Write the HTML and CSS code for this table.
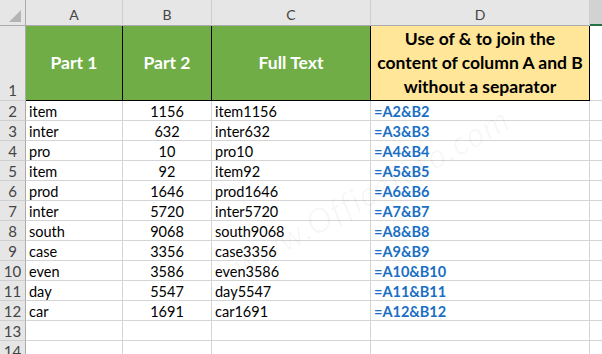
FILE: index.html
```html
<!DOCTYPE html>
<html lang="en">
<head>
<meta charset="UTF-8">
<title>Join with &amp;</title>
<link rel="stylesheet" href="styles.css">
</head>
<body>
<div class="sheet">
    <!-- column headers -->
    <div class="corner"><span class="tri"></span></div>
    <div class="colhead">A</div>
    <div class="colhead">B</div>
    <div class="colhead">C</div>
    <div class="colhead">D</div>
    <div class="colhead sel"></div>

    <!-- row 1 : titles -->
    <div class="rowhead tall">1</div>
    <div class="cell title">Part 1</div>
    <div class="cell title">Part 2</div>
    <div class="cell title">Full Text</div>
    <div class="cell note">Use of &amp; to join the<br>content of column A and B<br>without a separator</div>
    <div class="cell last"></div>

    <div class="rowhead">2</div><div class="cell">item</div><div class="cell num">1156</div><div class="cell">item1156</div><div class="cell formula">=A2&amp;B2</div><div class="cell last"></div>
    <div class="rowhead">3</div><div class="cell">inter</div><div class="cell num">632</div><div class="cell">inter632</div><div class="cell formula">=A3&amp;B3</div><div class="cell last"></div>
    <div class="rowhead">4</div><div class="cell">pro</div><div class="cell num">10</div><div class="cell">pro10</div><div class="cell formula">=A4&amp;B4</div><div class="cell last"></div>
    <div class="rowhead">5</div><div class="cell">item</div><div class="cell num">92</div><div class="cell">item92</div><div class="cell formula">=A5&amp;B5</div><div class="cell last"></div>
    <div class="rowhead">6</div><div class="cell">prod</div><div class="cell num">1646</div><div class="cell">prod1646</div><div class="cell formula">=A6&amp;B6</div><div class="cell last"></div>
    <div class="rowhead">7</div><div class="cell">inter</div><div class="cell num">5720</div><div class="cell">inter5720</div><div class="cell formula">=A7&amp;B7</div><div class="cell last"></div>
    <div class="rowhead">8</div><div class="cell">south</div><div class="cell num">9068</div><div class="cell">south9068</div><div class="cell formula">=A8&amp;B8</div><div class="cell last"></div>
    <div class="rowhead">9</div><div class="cell">case</div><div class="cell num">3356</div><div class="cell">case3356</div><div class="cell formula">=A9&amp;B9</div><div class="cell last"></div>
    <div class="rowhead">10</div><div class="cell">even</div><div class="cell num">3586</div><div class="cell">even3586</div><div class="cell formula">=A10&amp;B10</div><div class="cell last"></div>
    <div class="rowhead">11</div><div class="cell">day</div><div class="cell num">5547</div><div class="cell">day5547</div><div class="cell formula">=A11&amp;B11</div><div class="cell last"></div>
    <div class="rowhead">12</div><div class="cell">car</div><div class="cell num">1691</div><div class="cell">car1691</div><div class="cell formula">=A12&amp;B12</div><div class="cell last"></div>
    <div class="rowhead">13</div><div class="cell"></div><div class="cell"></div><div class="cell"></div><div class="cell"></div><div class="cell last"></div>
    <div class="rowhead">14</div><div class="cell"></div><div class="cell"></div><div class="cell"></div><div class="cell"></div><div class="cell last"></div>

    <div class="watermark">www.OfficeTuto.com</div>
</div>
</body>
</html>
```

FILE: styles.css
```css
body {
    margin: 0;
    padding: 0;
    background-color: #fff;
    font-family: 'Lato', 'Liberation Sans', sans-serif;
    overflow: hidden;
}

.sheet {
    position: relative;
    display: grid;
    grid-template-columns: 26px 97px 89px 159px 219px 1fr;
    grid-template-rows: 26px 75px repeat(13, 20px);
    width: 602px;
    height: 354px;
    overflow: hidden;
}

/* header strip */
.corner,
.colhead,
.rowhead {
    box-sizing: border-box;
    background-color: #e6e6e6;
    color: #444;
    font-size: 14px;
    display: flex;
    justify-content: center;
    align-items: center;
}
.corner {
    border-right: 1px solid #ababab;
    border-bottom: 1px solid #ababab;
    position: relative;
}
.tri {
    position: absolute;
    right: 4px;
    bottom: 3px;
    width: 12px;
    height: 12px;
    background-color: #b4b4b4;
    clip-path: polygon(100% 0, 100% 100%, 0 100%);
}
.colhead {
    border-right: 1px solid #cfcfcf;
    border-bottom: 1px solid #ababab;
    padding-top: 4px;
}
.colhead.sel {
    background-color: #d2d2d2;
    border-right: none;
    border-bottom: 2px solid #217346;
}
.rowhead {
    border-right: 1px solid #ababab;
    border-bottom: 1px solid #cfcfcf;
    font-size: 15px;
    padding-top: 1px;
}
.rowhead.tall {
    align-items: flex-end;
    padding-bottom: 1px;
}

/* cells */
.cell {
    box-sizing: border-box;
    border-right: 1px solid #d4d4d4;
    border-bottom: 1px solid #d4d4d4;
    font-size: 14.5px;
    line-height: 19px;
    padding: 1px 3px 0 3px;
    color: #000;
    white-space: nowrap;
}
.cell.last {border-right: none;}
.num {text-align: center;}
.formula {
    color: #1a6fc4;
    font-weight: 700;
}

.title,
.note {
    display: flex;
    justify-content: center;
    align-items: center;
    text-align: center;
    font-weight: 700;
    font-size: 17.5px;
    line-height: 24px;
    border-right: 1px solid #000;
    border-bottom: 1px solid #000;
    padding: 0;
}
.title {
    background-color: #70ad47;
    color: #fff;
}
.note {
    background-color: #ffe699;
    color: #000;
}

.watermark {
    position: absolute;
    left: 215px;
    top: 170px;
    font-size: 34px;
    font-style: italic;
    letter-spacing: 1px;
    color: rgba(0, 0, 0, 0.03);
    transform: rotate(-29deg);
    pointer-events: none;
}
```
